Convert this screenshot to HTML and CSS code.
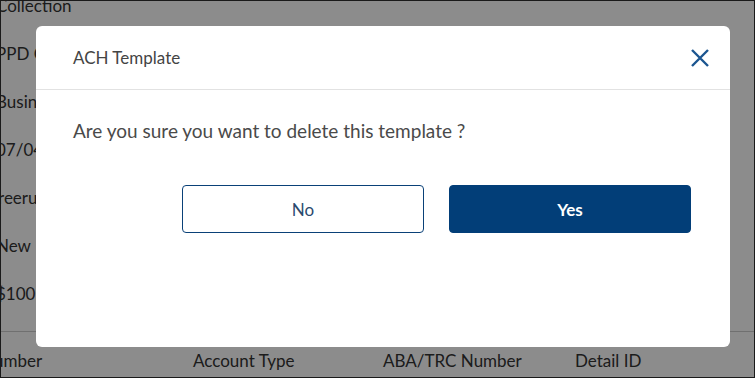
FILE: index.html
```html
<!DOCTYPE html>
<html lang="en">
<head>
    <meta charset="UTF-8">
    <meta name="viewport" content="width=device-width, initial-scale=1.0">
    <title>ACH Template</title>
    <link rel="stylesheet" href="styles.css">
</head>
<body>
    <!-- Page behind the dialog -->
    <div class="page">
        <div class="details">
            <div class="detail-value">Collection</div>
            <div class="detail-value">PPD Corporate</div>
            <div class="detail-value">Business Checking</div>
            <div class="detail-value">07/04/2023</div>
            <div class="detail-value shifted">Sreerupa Das</div>
            <div class="detail-value">New</div>
            <div class="detail-value">$100.00</div>
        </div>
        <div class="table-head">
            <span>Account Number</span>
            <span>Account Type</span>
            <span>ABA/TRC Number</span>
            <span>Detail ID</span>
        </div>
    </div>

    <!-- Delete confirmation -->
    <div class="backdrop">
        <div class="modal">
            <div class="modal-header">
                <h2 class="modal-title">ACH Template</h2>
                <button class="modal-close" aria-label="Close">
                    <svg width="20" height="20" viewBox="0 0 20 20">
                        <path d="M2 2 L18 18 M18 2 L2 18" stroke="#1b5590" stroke-width="2.4" fill="none"/>
                    </svg>
                </button>
            </div>
            <div class="modal-body">
                <p class="modal-text">Are you sure you want to delete this template ?</p>
                <div class="modal-actions">
                    <button class="btn btn-outline">No</button>
                    <button class="btn btn-primary">Yes</button>
                </div>
            </div>
        </div>
    </div>
</body>
</html>
```

FILE: styles.css
```css
html, body {
    margin: 0;
    height: 100%;
}

body {
    font-family: Lato, "Open Sans", sans-serif;
    color: #333;
    background: #fff;
    border: 1px solid #1a1a1a;
    box-sizing: border-box;
    overflow: hidden;
    position: relative;
}

/* Background page */
.details {
    margin-left: -5px;
    margin-top: -8px;
}

.detail-value {
    font-size: 17px;
    height: 48px;
    line-height: 26px;
    white-space: nowrap;
}

.detail-value.shifted {
    margin-left: -7px;
}

.table-head {
    margin-top: 2px;
    border-top: 1px solid #ccc;
    display: grid;
    grid-template-columns: 278px 190px 192px 1fr;
    margin-left: -86px;
    padding-top: 18px;
    font-size: 17px;
    white-space: nowrap;
}

/* Dialog */
.backdrop {
    position: absolute;
    inset: 0;
    background: rgba(0, 0, 0, 0.45);
}

.modal {
    position: absolute;
    left: 35px;
    top: 25px;
    width: 694px;
    height: 321px;
    background: #fff;
    border-radius: 6px;
}

.modal-header {
    display: flex;
    align-items: center;
    justify-content: space-between;
    height: 63px;
    padding: 0 20px 0 37px;
    border-bottom: 1px solid #e2e2e2;
}

.modal-title {
    margin: 0;
    font-size: 17px;
    font-weight: normal;
    color: #444;
}

.modal-close {
    border: none;
    background: none;
    padding: 0;
    width: 20px;
    height: 20px;
    cursor: pointer;
}

.modal-body {
    padding: 27px 39px 0 37px;
}

.modal-text {
    margin: 0;
    font-size: 19px;
    color: #4a4a4a;
    line-height: 28px;
}

.modal-actions {
    display: flex;
    justify-content: flex-end;
    gap: 25px;
    margin-top: 40px;
}

.btn {
    width: 242px;
    height: 48px;
    border-radius: 4px;
    font-family: Lato, "Open Sans", sans-serif;
    font-size: 17px;
    cursor: pointer;
}

.btn-outline {
    background: #fff;
    border: 1px solid #0a4178;
    color: #2b4a6e;
}

.btn-primary {
    background: #023e78;
    border: 1px solid #023e78;
    color: #fff;
    font-weight: bold;
}
```
